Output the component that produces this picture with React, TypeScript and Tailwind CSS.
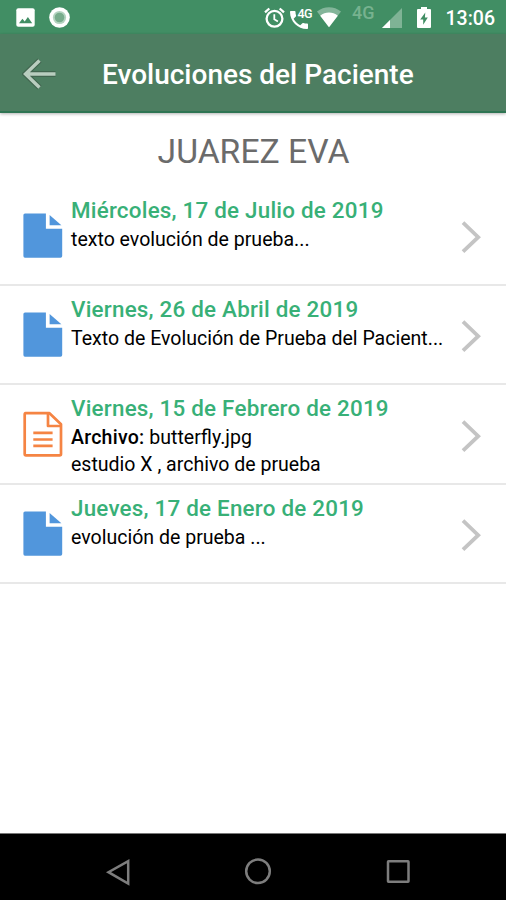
import React from "react";

type Evolution = {
  id: number;
  date: string;
  text: string;
  file?: string;
};

const evolutions: Evolution[] = [
  {
    id: 1,
    date: "Miércoles, 17 de Julio de 2019",
    text: "texto evolución de prueba...",
  },
  {
    id: 2,
    date: "Viernes, 26 de Abril de 2019",
    text: "Texto de Evolución de Prueba del Pacient...",
  },
  {
    id: 3,
    date: "Viernes, 15 de Febrero de 2019",
    text: "estudio X , archivo de prueba",
    file: "butterfly.jpg",
  },
  {
    id: 4,
    date: "Jueves, 17 de Enero de 2019",
    text: "evolución de prueba ...",
  },
];

const StatusBar: React.FC = () => {
  return (
    <div className="flex h-[34px] shrink-0 items-start bg-[#418e64] text-white">
      <svg className="mt-[8px] ml-[16px] h-[19px] w-[19px]" viewBox="0 0 19 19">
        <rect x="0.3" y="0.3" width="18.4" height="18.4" rx="2" fill="#fff" />
        <path d="M3 15.2l3.4-4.4 2.3 2.6 3.2-4.3 4.3 6.1z" fill="#418e64" />
      </svg>
      <svg className="mt-[7px] ml-[14px] h-[21px] w-[21px]" viewBox="0 0 21 21">
        <circle cx="10.5" cy="10.5" r="10.3" fill="#fff" />
        <circle cx="10.5" cy="10.5" r="6.6" fill="#b4d3c0" />
        <circle cx="10.5" cy="10.5" r="4.8" fill="#78ac8c" />
      </svg>

      <svg
        className="mt-[7px] ml-[194px] h-[21px] w-[21px]"
        viewBox="0 0 21 21"
        fill="none"
        stroke="#fff"
        strokeWidth="2.3"
      >
        <circle cx="10.5" cy="11.8" r="7.9" />
        <path d="M10.3 7.2v5l3.6 2.3" strokeWidth="1.8" />
        <path d="M1 5.3L5.3 1.5M20 5.3l-4.3-3.8" />
      </svg>
      <div className="relative ml-[5px] h-[34px] w-[22px]">
        <svg className="mt-[10.5px] h-[18px] w-[18px]" viewBox="3 3 18 18">
          <path
            d="M20 15.5c-1.25 0-2.45-.2-3.57-.57-.35-.11-.74-.03-1.02.24l-2.2 2.2c-2.83-1.44-5.15-3.75-6.59-6.59l2.2-2.2c.28-.28.36-.67.25-1.02C8.7 6.45 8.5 5.25 8.5 4c0-.55-.45-1-1-1H4c-.55 0-1 .45-1 1 0 9.39 7.61 17 17 17 .55 0 1-.45 1-1v-3.5c0-.55-.45-1-1-1z"
            fill="#fff"
          />
        </svg>
        <span className="absolute top-[6px] left-[7.5px] text-[12.5px] leading-[15px] font-medium tracking-[-0.7px]">
          4G
        </span>
      </div>
      <svg className="mt-[7px] ml-[5px] h-[21px] w-[24px]" viewBox="0 0 24 21">
        <path d="M0 4.5C7-1.2 17-1.2 24 4.5L12 20.3z" fill="#fff" opacity="0.35" />
        <path d="M3.2 8.7c5-4.2 12.6-4.2 17.6 0L12 20.3z" fill="#fff" />
      </svg>
      <span className="mt-[2px] ml-[11px] w-[30px] text-[18px] leading-[21px] font-medium text-[#77b28f]">
        4G
      </span>
      <svg className="mt-[8px] h-[20px] w-[20px]" viewBox="0 0 20 20">
        <path d="M20 0v20H0z" fill="#7fb395" />
        <path d="M8 12v8H0z" fill="#fff" />
      </svg>
      <svg className="mt-[7px] ml-[15px] h-[21px] w-[14px]" viewBox="0 0 14 21">
        <path d="M4 0h6v2h3q1 0 1 1v17q0 1-1 1H1q-1 0-1-1V3q0-1 1-1h3z" fill="#fff" />
        <path d="M8.3 5.5L3.2 12.5h3v5.3L10.8 10.5H7.9z" fill="#418e64" />
      </svg>
      <span className="mt-[7px] ml-[14.5px] text-[19.5px] leading-6 font-medium">13:06</span>
    </div>
  );
};

const Header: React.FC = () => {
  return (
    <header className="z-10 flex h-[79px] shrink-0 items-center border-b-2 border-[#2f7553] bg-[#4d7e61] shadow-[0_1px_3px_rgba(0,0,0,0.3)]">
      <button type="button" aria-label="Volver" className="ml-[22px] w-[80px] pt-[2px]">
        <svg className="h-[34px] w-[36px]" viewBox="0 0 36 34" fill="none">
          <path d="M17.5 3.5L3.5 17l14 13.5M4.5 17H33.5" stroke="#426650" strokeWidth="5.8" />
          <path d="M17.5 3.5L3.5 17l14 13.5M4.5 17H33.5" stroke="#b9cdbf" strokeWidth="3.4" />
        </svg>
      </button>
      <h1 className="pt-[5px] text-[28px] leading-8 font-medium whitespace-nowrap text-white">
        Evoluciones del Paciente
      </h1>
    </header>
  );
};

const NoteIcon: React.FC = () => {
  return (
    <svg className="h-[46px] w-[40px] shrink-0" viewBox="0 0 40 46" fill="#5196dc">
      <path d="M2 .4H22.9V15.8H39.2V43.1q0 1.7-1.7 1.7H2Q.4 44.8.4 43.1V2.1Q.4.4 2 .4z" />
      <path d="M26.6 2L38.4 12.3H26.6z" />
    </svg>
  );
};

const FileIcon: React.FC = () => {
  return (
    <svg
      className="h-[46px] w-[40px] shrink-0"
      viewBox="0 0 40 46"
      fill="none"
      stroke="#f58443"
      strokeWidth="2.7"
      strokeLinejoin="round"
    >
      <path d="M2.5 2.2H26.5L38 13.2V43q0 1.4-1.4 1.4H3q-1.3 0-1.3-1.4V3.4q0-1.2.8-1.2z" />
      <path d="M25 2.4V15H38M10.3 21.8H29.6M10.3 28.5H29.6M10.3 34.9H29.6" />
    </svg>
  );
};

const EvolutionRow: React.FC<{ item: Evolution }> = ({ item }) => {
  return (
    <li className="flex h-[99.4px] border-b-2 border-[#e8e8e8]">
      <div className="w-[71px] pt-[26px] pl-[23px]">{item.file ? <FileIcon /> : <NoteIcon />}</div>
      <div className="flex-1 pt-[9px] whitespace-nowrap text-black">
        <p className="mb-[1px] text-[22.4px] leading-[29px] font-medium tracking-[0.22px] text-[#38b077]">
          {item.date}
        </p>
        {item.file && (
          <p className="text-[19.55px] leading-[27px]">
            <b className="font-medium tracking-[0.25px]">Archivo:</b> {item.file}
          </p>
        )}
        <p className="text-[19.55px] leading-[27px]">{item.text}</p>
      </div>
      <svg
        className="mt-[33.5px] mr-[24px] h-[34px] w-[21px] shrink-0"
        viewBox="0 0 21 34"
        fill="none"
        stroke="#c4c4c4"
        strokeWidth="3.8"
      >
        <path d="M2 2.7L17.2 17.2 2 31.7" />
      </svg>
    </li>
  );
};

const NavigationBar: React.FC = () => {
  return (
    <nav className="flex h-[67px] shrink-0 items-center justify-between border-t border-[#777] bg-black pt-[9px] pr-[94px] pl-[105px]">
      <svg className="h-[28px] w-[28px]" viewBox="0 0 28 28" fill="none" stroke="#7d7d7d" strokeWidth="2.5">
        <path d="M23.2 3.2V25.5L3.5 14.2z" />
      </svg>
      <svg className="mr-[2px] h-[28px] w-[28px]" viewBox="0 0 28 28" fill="none" stroke="#7d7d7d" strokeWidth="2.5">
        <circle cx="14" cy="13.3" r="11.8" />
      </svg>
      <svg className="h-[28px] w-[28px]" viewBox="0 0 28 28" fill="none" stroke="#7d7d7d" strokeWidth="2.5">
        <rect x="4" y="3.2" width="20.5" height="20.5" rx="0.5" />
      </svg>
    </nav>
  );
};

const App: React.FC = () => {
  return (
    <div className="flex h-[900px] w-[506px] flex-col overflow-hidden bg-white font-[Roboto,sans-serif]">
      <StatusBar />
      <Header />
      <main className="flex-1">
        <h2 className="h-[73.5px] pt-[19px] pl-[1px] text-center text-[33.7px] leading-[40px] text-[#6b6b6b]">
          JUAREZ EVA
        </h2>
        <ul>
          {evolutions.map((item) => (
            <EvolutionRow key={item.id} item={item} />
          ))}
        </ul>
      </main>
      <NavigationBar />
    </div>
  );
};

export default App;
